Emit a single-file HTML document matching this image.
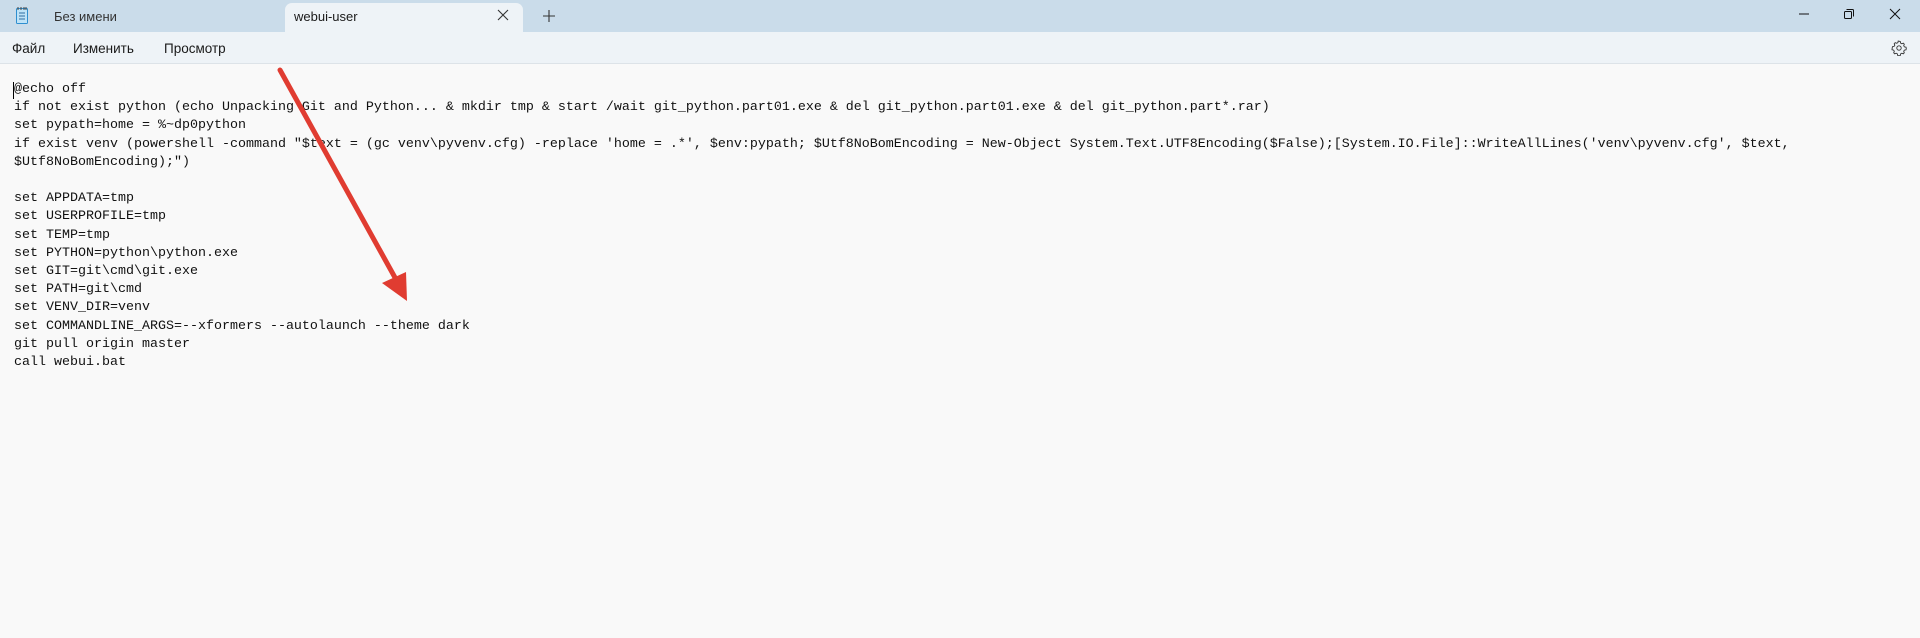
<!DOCTYPE html>
<html><head><meta charset="utf-8"><style>
*{margin:0;padding:0;box-sizing:border-box}
body{width:1920px;height:638px;overflow:hidden;background:#f9f9f9;font-family:"Liberation Sans",sans-serif;position:relative}
.title{position:absolute;left:0;top:0;width:1920px;height:32px;background:#cadcea}
.tab{position:absolute;left:285px;top:3px;width:238px;height:29px;background:#eef3f7;border-radius:7px 7px 0 0}
.menu{position:absolute;left:0;top:32px;width:1920px;height:32px;background:#eef3f7;border-bottom:1px solid #dde3e8}
.t{position:absolute;font-size:13px;color:#1a1a1a;white-space:nowrap}
.m{position:absolute;top:41px;font-size:13.5px;color:#1a1a1a}
pre{position:absolute;left:14px;top:81px;font-family:"Liberation Mono",monospace;font-size:13.33px;line-height:18.2px;color:#111}
</style></head><body>
<div class="title"></div>
<div class="tab"></div>
<svg style="position:absolute;left:15px;top:6px" width="14" height="19" viewBox="0 0 14 19"><rect x="1" y="2" width="12" height="16" rx="1.5" fill="#2f8fd0"/><rect x="2" y="3" width="10" height="14" fill="#bfe3f7"/><path d="M4 7h6M4 10h6M4 13h6" stroke="#2f6ea0" stroke-width="1"/><path d="M3 1v3M6 1v3M9 1v3M11 1v3" stroke="#444" stroke-width="1"/></svg>
<div class="t" style="left:54px;top:9px;color:#333">Без имени</div>
<div class="t" style="left:294px;top:9px">webui-user</div>
<svg style="position:absolute;left:497px;top:9px" width="12" height="12"><path d="M1 1L11 11M11 1L1 11" stroke="#333" stroke-width="1.1"/></svg>
<svg style="position:absolute;left:543px;top:10px" width="12" height="12"><path d="M6 0V12M0 6H12" stroke="#333" stroke-width="1.1"/></svg>
<svg style="position:absolute;left:1798px;top:8px" width="12" height="12"><path d="M1 6H11" stroke="#111" stroke-width="1"/></svg>
<svg style="position:absolute;left:1843px;top:8px" width="12" height="12"><rect x="1.5" y="3.5" width="7" height="7" rx="1" fill="none" stroke="#111"/><path d="M3.5 1.5H9.5a1 1 0 0 1 1 1V8.5" fill="none" stroke="#111"/></svg>
<svg style="position:absolute;left:1889px;top:8px" width="12" height="12"><path d="M1 1L11 11M11 1L1 11" stroke="#111" stroke-width="1"/></svg>
<div class="menu"></div>
<div class="m" style="left:12px">Файл</div>
<div class="m" style="left:73px">Изменить</div>
<div class="m" style="left:164px">Просмотр</div>
<svg style="position:absolute;left:1891px;top:40px" width="16" height="16" viewBox="0 0 16 16"><path d="M8 1.2l1.3.3.3 1.6 1.2.7 1.5-.6 1 1 -.6 1.5.7 1.2 1.6.3.3 1.3-.3 1.3-1.6.3-.7 1.2.6 1.5-1 1-1.5-.6-1.2.7-.3 1.6-1.3.3-1.3-.3-.3-1.6-1.2-.7-1.5.6-1-1 .6-1.5-.7-1.2-1.6-.3L1.2 8l.3-1.3 1.6-.3.7-1.2-.6-1.5 1-1 1.5.6 1.2-.7.3-1.6z" fill="none" stroke="#333" stroke-width=".9"/><circle cx="8" cy="8" r="2.2" fill="none" stroke="#333" stroke-width=".9"/></svg>
<pre>@echo off
if not exist python (echo Unpacking Git and Python... &amp; mkdir tmp &amp; start /wait git_python.part01.exe &amp; del git_python.part01.exe &amp; del git_python.part*.rar)
set pypath=home = %~dp0python
if exist venv (powershell -command "$text = (gc venv\pyvenv.cfg) -replace 'home = .*', $env:pypath; $Utf8NoBomEncoding = New-Object System.Text.UTF8Encoding($False);[System.IO.File]::WriteAllLines('venv\pyvenv.cfg', $text,
$Utf8NoBomEncoding);")

set APPDATA=tmp
set USERPROFILE=tmp
set TEMP=tmp
set PYTHON=python\python.exe
set GIT=git\cmd\git.exe
set PATH=git\cmd
set VENV_DIR=venv
set COMMANDLINE_ARGS=--xformers --autolaunch --theme dark
git pull origin master
call webui.bat</pre>
<div style="position:absolute;left:13px;top:82px;width:1px;height:17px;background:#000"></div>
<svg style="position:absolute;left:0;top:0" width="1920" height="638"><path d="M280 70L398 283" stroke="#e03c31" stroke-width="5" stroke-linecap="round"/><path d="M407 301L382 283L406 272Z" fill="#e03c31"/></svg>
</body></html>
